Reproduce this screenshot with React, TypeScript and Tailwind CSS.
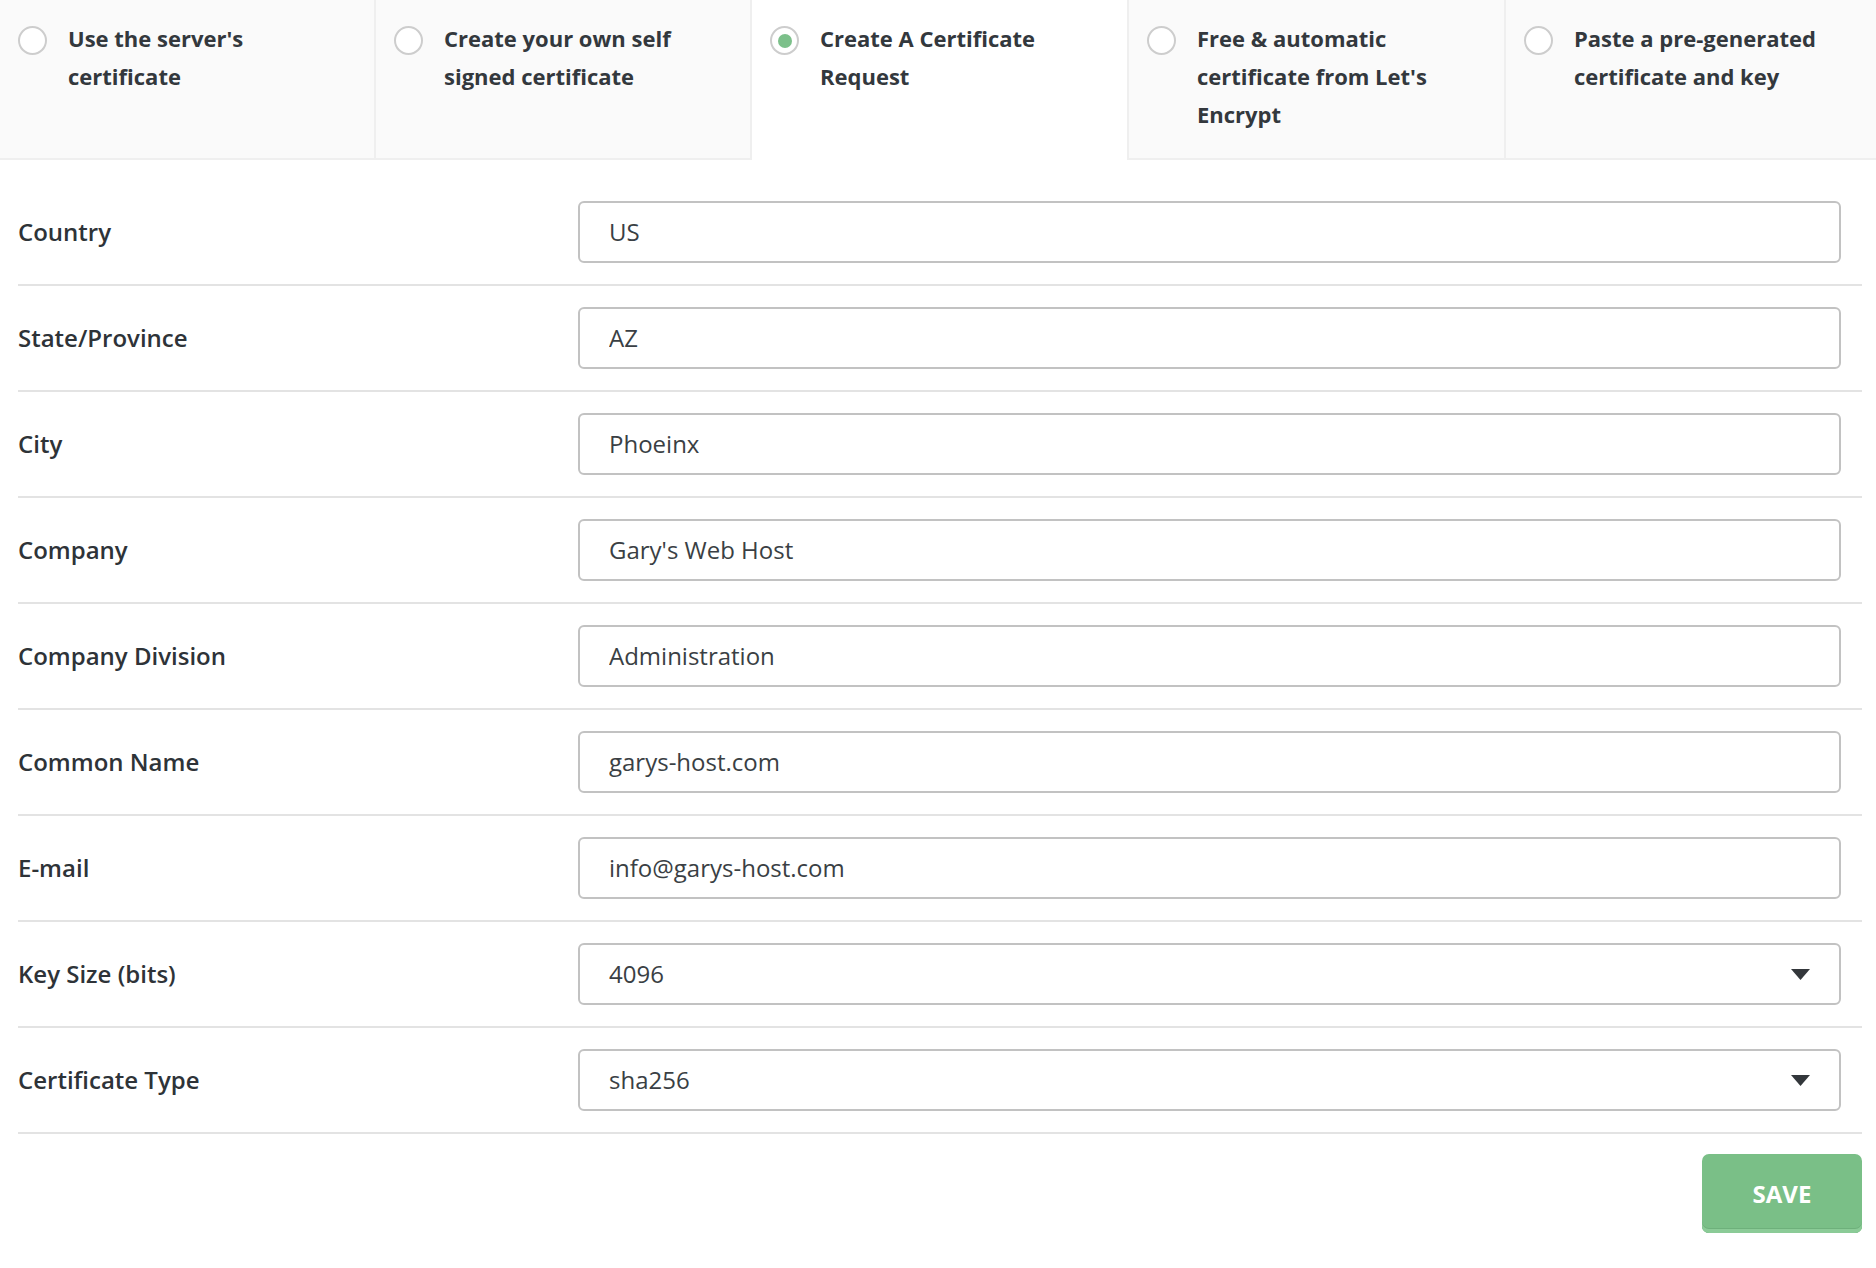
import React from "react";

const tabs = [
  { label: "Use the server's certificate", width: "w-[376px]" },
  { label: "Create your own self signed certificate", width: "w-[376px]" },
  { label: "Create A Certificate Request", width: "w-[377px]", active: true },
  { label: "Free & automatic certificate from Let's Encrypt", width: "w-[377px]" },
  { label: "Paste a pre-generated certificate and key", width: "flex-1" },
];

const fields = [
  { label: "Country", value: "US" },
  { label: "State/Province", value: "AZ" },
  { label: "City", value: "Phoeinx" },
  { label: "Company", value: "Gary's Web Host" },
  { label: "Company Division", value: "Administration" },
  { label: "Common Name", value: "garys-host.com" },
  { label: "E-mail", value: "info@garys-host.com" },
  { label: "Key Size (bits)", value: "4096", select: true },
  { label: "Certificate Type", value: "sha256", select: true },
];

function Radio({ checked }: { checked?: boolean }) {
  return (
    <span className="mt-[7px] flex h-[29px] w-[29px] shrink-0 items-center justify-center rounded-full border-2 border-[#cdcdcd] bg-white">
      {checked && <span className="h-[14px] w-[14px] rounded-full bg-[#7cc08a]" />}
    </span>
  );
}

function CaretDown() {
  return (
    <svg width="19" height="11" viewBox="0 0 19 11" className="shrink-0">
      <path d="M0 0 H19 L9.5 11 Z" fill="#33373b" />
    </svg>
  );
}

export default function App() {
  return (
    <div className="min-h-screen w-full overflow-hidden bg-white font-['Open_Sans',sans-serif] text-[#2e3338]">
      <div className="-ml-[2px] flex">
        {tabs.map((tab) => (
          <div
            key={tab.label}
            className={
              (tab.active
                ? "flex shrink-0 gap-[21px] border-l-2 border-[#efefef] bg-white pl-[18px] pr-4 pt-[19px] pb-[27px] "
                : "flex shrink-0 gap-[21px] border-l-2 border-b-2 border-[#efefef] bg-[#fafafa] pl-[18px] pr-4 pt-[19px] pb-[25px] ") +
              tab.width
            }
          >
            <Radio checked={tab.active} />
            <span className="text-[22px] font-bold leading-[38px] text-[#33383d]">{tab.label}</span>
          </div>
        ))}
      </div>

      <div className="pl-[18px] pr-[14px] pt-[20px]">
        {fields.map((f) => (
          <div key={f.label} className="flex items-center border-b-2 border-[#e3e3e3] py-[21px]">
            <label className="w-[560px] shrink-0 text-[24px] font-semibold">{f.label}</label>
            <div className="mr-[21px] flex h-[62px] flex-1 items-center justify-between rounded-[6px] border-2 border-[#c2c2c2] pl-[29px] pr-[29px]">
              {f.select ? (
                <>
                  <span className="text-[24px] text-[#3a3f44]">{f.value}</span>
                  <CaretDown />
                </>
              ) : (
                <input
                  defaultValue={f.value}
                  className="w-full bg-transparent text-[24px] text-[#3a3f44] outline-none"
                />
              )}
            </div>
          </div>
        ))}

        <div className="flex justify-end pt-[20px]">
          <button className="h-[79px] w-[160px] rounded-[7px] bg-[#7abf87] text-[24px] font-bold text-white shadow-[inset_0_-4px_0_#8bcb97,inset_0_-5px_0_#6eb07b]">
            SAVE
          </button>
        </div>
      </div>
    </div>
  );
}
